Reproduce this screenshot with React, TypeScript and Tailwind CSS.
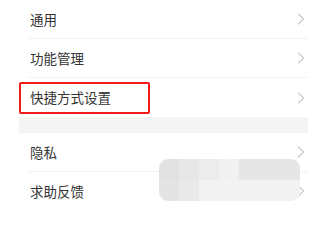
import React from "react";

const GROUPS = [
  [
    { label: "通用" },
    { label: "功能管理" },
    { label: "快捷方式设置", marked: true },
  ],
  [{ label: "隐私" }, { label: "求助反馈" }],
];

const Chevron = () => (
  <svg width="8" height="12" viewBox="0 0 8 12" fill="none">
    <path d="M1.5 1 L6.5 6 L1.5 11" stroke="#c9c9c9" strokeWidth="1.2" strokeLinecap="round" strokeLinejoin="round" />
  </svg>
);

const Row = ({ label, marked, last }: { label: string; marked?: boolean; last?: boolean }) => (
  <div className="relative ml-[9px]">
    <div
      className={`flex h-[39px] items-center justify-between pl-[2px] pr-[3px] ${
        last ? "" : "border-b border-[#f3f3f3]"
      }`}
    >
      <span className="text-[13.5px] text-[#333]">{label}</span>
      <Chevron />
    </div>
    {/* red annotation box */}
    {marked && (
      <div className="absolute left-[-9px] top-[4px] h-[32px] w-[131px] rounded-[2px] border-2 border-[#f01c1c]" />
    )}
  </div>
);

// pixelated blur patch
const MOSAIC = [
  ["#e2e2e2", "#e7e7e7", "#ececec", "#f1f1f1", "#e6e6e6"],
  ["#e4e4e4", "#e9e9e9", "#f3f3f3", "#f3f3f3", "#f2f2f2"],
];

export default function App() {
  return (
    <div
      className="relative h-[208px] w-[308px] overflow-hidden bg-white"
      style={{ fontFamily: '"Noto Sans CJK SC", "Noto Sans", sans-serif' }}
    >
      <div className="ml-[19px]">
        {GROUPS.map((group, gi) => (
          <div key={gi}>
            {gi > 0 && <div className="h-[16px] bg-[#f4f4f4]" />}
            {group.map((item, i) => (
              <Row key={item.label} label={item.label} marked={item.marked} last={gi === 0 && i === group.length - 1} />
            ))}
          </div>
        ))}
      </div>

      <div className="absolute left-[159px] top-[159px] grid h-[42px] w-[141px] grid-cols-[20px_20px_20px_20px_1fr] grid-rows-2 overflow-hidden rounded-[9px]">
        {MOSAIC.flat().map((c, i) => (
          <div key={i} style={{ backgroundColor: c }} />
        ))}
      </div>
    </div>
  );
}
